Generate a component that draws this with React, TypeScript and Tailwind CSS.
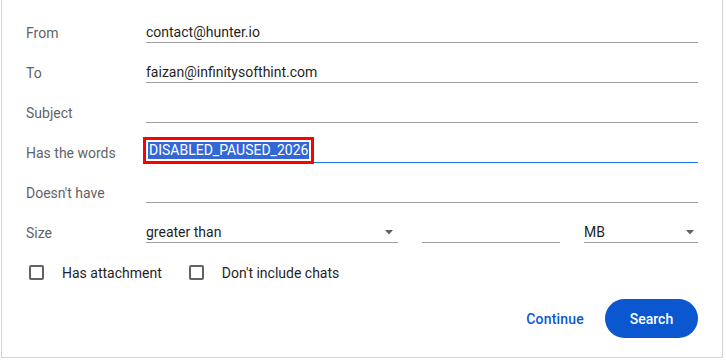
const font = { fontFamily: "Roboto, 'Noto Sans', Arial, sans-serif" };

function Arrow() {
  return (
    <svg width="8" height="5" viewBox="0 0 8 5" className="shrink-0">
      <path d="M0 0h8L4 4.5z" fill="#5f6368" />
    </svg>
  );
}

function Row({ label, value, active, children }: { label: string; value?: string; active?: boolean; children?: React.ReactNode }) {
  return (
    <div className="flex h-10">
      <div className="flex h-[31px] w-[120px] shrink-0 items-end text-sm leading-5 text-[#5f6368]">{label}</div>
      {children ?? (
        <div
          className={
            "flex h-[31px] flex-1 items-end border-b text-sm leading-5 text-[#1f1f1f] " +
            (active ? "border-[#1a73e8]" : "border-[#9e9e9e]")
          }
        >
          {value}
        </div>
      )}
    </div>
  );
}

function Checkbox({ label }: { label: string }) {
  return (
    <label className="flex items-center">
      <span className="h-[15px] w-[15px] rounded-[2px] border-2 border-[#5f6368]" />
      <span className="ml-[18px] text-sm text-[#1f1f1f]">{label}</span>
    </label>
  );
}

export default function App() {
  return (
    <div className="h-[360px] w-[726px] bg-white pl-px" style={font}>
      <div className="flex h-[358px] w-[722px] flex-col border-x border-b border-[#d3d3d3] px-6 pt-3">
        <Row label="From" value="contact@hunter.io" />
        <Row label="To" value="faizan@infinitysofthint.com" />
        <Row label="Subject" value="" />
        <Row label="Has the words">
          <div className="flex h-[31px] flex-1 items-end border-b border-[#1a73e8] text-sm leading-5">
            <span className="mb-[3px] ml-[2px] bg-[#3367d6] px-px leading-[17px] text-white outline-[3px] outline-offset-2 outline-[#f00] outline-solid">
              DISABLED_PAUSED_2026
            </span>
          </div>
        </Row>
        <Row label="Doesn't have" value="" />
        <Row label="Size">
          <div className="flex flex-1 gap-6">
            <div className="flex h-[31px] w-[252px] items-end justify-between border-b border-[#9e9e9e] pr-[5px] text-sm leading-5 text-[#1f1f1f]">
              <span>greater than</span>
              <span className="mb-[7px]"><Arrow /></span>
            </div>
            <div className="h-[31px] w-[138px] border-b border-[#9e9e9e]" />
            <div className="flex h-[31px] flex-1 items-end justify-between border-b border-[#9e9e9e] pr-[4px] text-sm leading-5 text-[#1f1f1f]">
              <span>MB</span>
              <span className="mb-[7px]"><Arrow /></span>
            </div>
          </div>
        </Row>
        <div className="flex h-10 items-center gap-[27px] pl-[3px] pt-px">
          <Checkbox label="Has attachment" />
          <Checkbox label="Don't include chats" />
        </div>
        <div className="mt-[7px] flex items-center justify-end">
          <button className="mr-[21px] text-sm font-medium tracking-[0.2px] text-[#0b57d0]">Continue</button>
          <button className="h-[39px] w-[93px] rounded-full bg-[#0b57d0] text-sm font-medium text-white">Search</button>
        </div>
      </div>
    </div>
  );
}
